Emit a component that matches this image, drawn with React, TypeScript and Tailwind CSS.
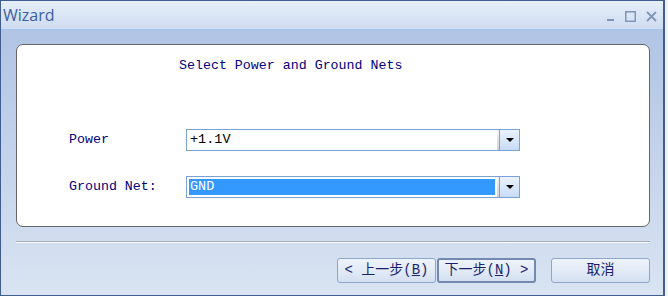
import React from "react";

const mono = { fontFamily: '"Liberation Mono", "Noto Sans CJK SC", monospace' };

function Combo({ value, selected }: { value: string; selected?: boolean }) {
  return (
    <div className="flex h-[22px] w-[334px] border border-[#7ba2d6] bg-white">
      <div className="flex flex-1 items-stretch p-[2px]">
        <div
          className={
            selected
              ? "flex flex-1 items-center bg-[#3399ff] pl-[1px] text-[13.5px] leading-none text-white"
              : "flex flex-1 items-center pl-[1px] text-[13.5px] leading-none text-black"
          }
          style={mono}
        >
          {value}
        </div>
      </div>
      <div className="w-[2px] bg-gradient-to-b from-[#f4f4f4] to-[#d2d2d2]" />
      <div className="flex w-[20px] items-center justify-center border-l border-[#7ba2d6] bg-gradient-to-b from-[#eaf2fd] to-[#c8dcf7]">
        <svg width="8" height="4" viewBox="0 0 8 4">
          <path d="M0 0H8L4 4Z" fill="#000" />
        </svg>
      </div>
    </div>
  );
}

function WizButton({
  children,
  active,
}: {
  children: React.ReactNode;
  active?: boolean;
}) {
  return (
    <button
      className={
        active
          ? "flex h-[25px] w-[99px] items-center justify-center rounded-[3px] border-2 border-[#7489b0] bg-gradient-to-b from-[#eef3fb] via-[#e3ebf7] to-[#d3dff1] text-[14px] text-[#1b1f6e]"
          : "flex h-[25px] w-[99px] items-center justify-center rounded-[3px] border border-[#8fa5ca] bg-gradient-to-b from-[#eef3fb] via-[#e3ebf7] to-[#d3dff1] text-[14px] text-[#1b1f6e]"
      }
      style={mono}
    >
      {children}
    </button>
  );
}

export default function App() {
  return (
    <div className="h-[296px] w-[668px] overflow-hidden bg-[#eef2f9]">
      <div className="flex h-[296px] w-[665px] flex-col border border-[#3f5d8f] border-r-[2px]">
        {/* title bar */}
        <div className="flex h-[29px] items-center justify-between border-b border-[#a9c6ee] bg-gradient-to-b from-[#e6eef9] to-[#cedcf1] pl-[2px] pr-[6px]">
          <span
            className="text-[16px] text-[#3c5da2]"
            style={{ fontFamily: '"Open Sans", "Liberation Sans", sans-serif' }}
          >
            Wizard
          </span>
          <div className="flex items-center gap-[10px] pt-[2px]">
            <svg width="10" height="12" viewBox="0 0 10 12">
              <rect x="2" y="9" width="7" height="2" fill="#8096b8" />
            </svg>
            <svg width="11" height="11" viewBox="0 0 11 11">
              <rect x="0.75" y="0.75" width="9.5" height="9.5" fill="none" stroke="#8096b8" strokeWidth="1.5" />
            </svg>
            <svg width="11" height="11" viewBox="0 0 11 11">
              <path d="M1 1L10 10M10 1L1 10" stroke="#8096b8" strokeWidth="1.8" />
            </svg>
          </div>
        </div>

        {/* body */}
        <div className="flex flex-1 flex-col bg-gradient-to-b from-[#b1c4e4] to-[#d9e4f2] pl-[15px] pr-[13px] pt-[14px]">
          <div className="h-[183px] rounded-[7px] border border-[#666] bg-white" style={mono}>
            <div className="pl-[162px] pt-[13px] text-[13.3px] leading-[16px] text-[#000080]">
              Select Power and Ground Nets
            </div>
            <div className="mt-[55px] flex items-center">
              <div className="w-[169px] pl-[52px] text-[13.3px] text-[#000080]">Power</div>
              <Combo value="+1.1V" />
            </div>
            <div className="mt-[25px] flex items-center">
              <div className="w-[169px] pl-[52px] text-[13.3px] text-[#000080]">Ground Net:</div>
              <Combo value="GND" selected />
            </div>
          </div>

          <div className="mt-[14px] h-[2px] border-t border-b border-t-[#a3a9b4] border-b-white" />

          <div className="mt-[15px] flex justify-end">
            <WizButton>
              &lt; 上一步(<span className="underline">B</span>)
            </WizButton>
            <div className="w-[1px]" />
            <WizButton active>
              下一步(<span className="underline">N</span>) &gt;
            </WizButton>
            <div className="w-[15px]" />
            <WizButton>取消</WizButton>
          </div>
        </div>
      </div>
    </div>
  );
}
